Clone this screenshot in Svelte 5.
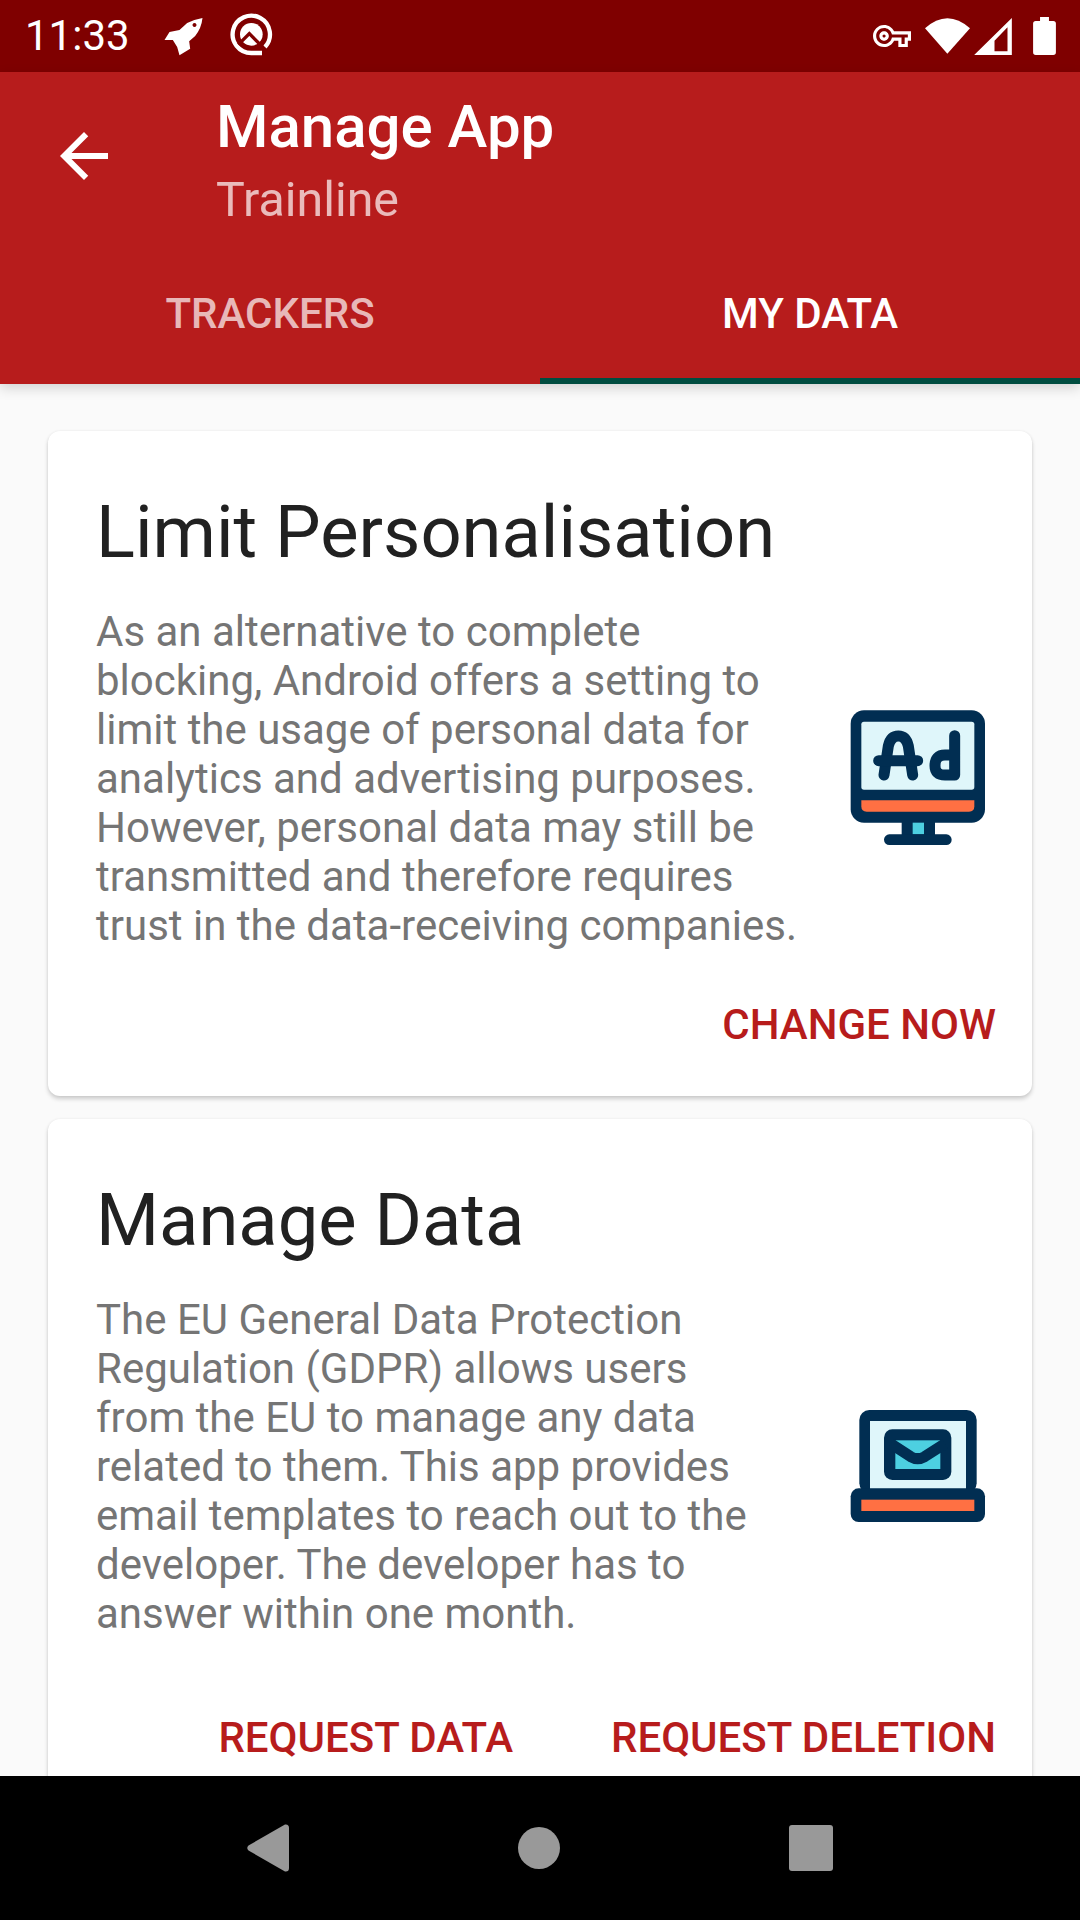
<script>
  const cards = [
    {
      title: 'Limit Personalisation',
      body: 'As an alternative to complete blocking, Android offers a setting to limit the usage of personal data for analytics and advertising purposes. However, personal data may still be transmitted and therefore requires trust in the data-receiving companies.',
      icon: 'ad',
      narrow: false,
      actions: ['CHANGE NOW']
    },
    {
      title: 'Manage Data',
      body: 'The EU General Data Protection Regulation (GDPR) allows users from the EU to manage any data related to them. This app provides email templates to reach out to the developer. The developer has to answer within one month.',
      icon: 'mail',
      narrow: true,
      actions: ['REQUEST DATA', 'REQUEST DELETION']
    }
  ];
</script>

<div class="screen">
  <div class="status">
    <span class="time">11:33</span>
    <svg class="rocket" viewBox="20 20 125 120" width="42" height="40">
      <path fill="#fff" fill-rule="evenodd" d="M141 26Q138 56 119 80L101 96L104 118L72 138L65 113L52 92L27 92L42 68L72 62L95 41Q115 30 141 26ZM117 41a6 6 0 1 0 .01 0Z" />
    </svg>
    <svg class="q" viewBox="0 0 180 165" width="60" height="55">
      <path fill="none" stroke="#fff" stroke-width="13" d="M144 111A56 56 0 1 0 103 129H135" />
      <circle cx="103" cy="73" r="34" fill="#fff" />
      <path fill="none" stroke="#7f0000" stroke-width="10" d="M64 104L97 71L136 110" />
    </svg>
    <span class="spacer"></span>
    <svg class="key" viewBox="0 0 24 24" width="38" height="38">
      <path fill="#fff" d="M22 19h-6v-4h-2.68c-1.14 2.42-3.6 4-6.32 4-3.86 0-7-3.14-7-7s3.14-7 7-7c2.72 0 5.17 1.58 6.32 4H24v6h-2v4zm-4-2h2v-4h2v-2H11.94l-.23-.67C11.01 8.34 9.11 7 7 7c-2.76 0-5 2.24-5 5s2.24 5 5 5c2.11 0 4.01-1.34 4.71-3.33l.23-.67H18v4zM7 15c-1.65 0-3-1.35-3-3s1.35-3 3-3 3 1.35 3 3-1.35 3-3 3zm0-4c-.55 0-1 .45-1 1s.45 1 1 1 1-.45 1-1-.45-1-1-1z" />
    </svg>
    <svg class="wifi" viewBox="225 55 135 107" width="45" height="36">
      <path fill="#fff" d="M292 162L225 85Q292 25 360 85Z" />
    </svg>
    <svg class="signal" viewBox="372 52 113 111" width="38" height="37">
      <path fill="#fff" fill-rule="evenodd" d="M372 163L485 52V163ZM433 152H472V80L433 120Z" />
    </svg>
    <svg class="battery" viewBox="549 48 69 115" width="23" height="38">
      <path fill="#fff" d="M570 48H597V60H610Q618 60 618 68V155Q618 163 610 163H557Q549 163 549 155V68Q549 60 557 60H570Z" />
    </svg>
  </div>

  <header class="appbar">
    <div class="toolbar">
      <svg class="back" viewBox="0 0 24 24" width="72" height="72">
        <path fill="#fff" d="M20 11H7.83l5.59-5.59L12 4l-8 8 8 8 1.41-1.41L7.83 13H20v-2z" />
      </svg>
      <div class="heading">
        <div class="title">Manage App</div>
        <div class="subtitle">Trainline</div>
      </div>
    </div>
    <div class="tabs">
      <div class="tab">TRACKERS</div>
      <div class="tab active">MY DATA</div>
    </div>
  </header>

  <main class="content">
    {#each cards as card}
      <section class="card">
        <h2>{card.title}</h2>
        <div class="row">
          <p class:narrow={card.narrow}>{card.body}</p>
          {#if card.icon === 'ad'}
            <svg class="art" viewBox="78 48 432 432" width="144" height="144">
              <rect x="92" y="58" width="403" height="337" rx="40" fill="#012e52" />
              <rect x="124" y="92" width="339" height="204" rx="8" fill="#dff6fa" />
              <path d="M124 328H463V346Q463 362 447 362H140Q124 362 124 346Z" fill="#ff7043" />
              <rect x="245" y="390" width="100" height="45" fill="#012e52" />
              <rect x="278" y="395" width="34" height="35" fill="#4dd0e1" />
              <rect x="192" y="430" width="203" height="32" rx="16" fill="#012e52" />
              <g fill="none" stroke="#012e52" stroke-width="33" stroke-linecap="round" stroke-linejoin="round">
                <path d="M192 252L205 165Q212 135 235 135Q258 135 265 165L278 252" />
                <path d="M176 209H293" />
                <path d="M404 134V252H375Q345 252 345 224Q345 192 375 192H404" />
              </g>
            </svg>
          {:else}
            <svg class="art" viewBox="78 12 432 432" width="144" height="144">
              <rect x="118" y="57" width="352" height="250" rx="30" fill="#012e52" />
              <rect x="150" y="90" width="288" height="210" fill="#dff6fa" />
              <rect x="92" y="292" width="403" height="101" rx="24" fill="#012e52" />
              <rect x="124" y="326" width="339" height="34" fill="#ff7043" />
              <rect x="192" y="115" width="202" height="152" rx="25" fill="#012e52" />
              <rect x="226" y="148" width="135" height="86" fill="#4dd0e1" />
              <path d="M212 158L272 197Q293 209 314 197L375 158" fill="none" stroke="#012e52" stroke-width="33" />
            </svg>
          {/if}
        </div>
        <div class="actions" class:split={card.actions.length > 1}>
          {#each card.actions as action}
            <span class="action">{action}</span>
          {/each}
        </div>
      </section>
    {/each}
  </main>

  <nav class="navbar">
    <svg viewBox="0 0 42 48" width="42" height="48">
      <path fill="#999" d="M38 0.5Q42 0 42 4V44Q42 48 38 47.5L1.5 26.5Q-1 24 1.5 21.5Z" />
    </svg>
    <span class="home"></span>
    <span class="recents"></span>
  </nav>
</div>

<style>
  :global(body) {
    margin: 0;
    background: #fafafa;
  }

  .screen {
    width: 1080px;
    height: 1920px;
    display: flex;
    flex-direction: column;
    overflow: hidden;
    font-family: Roboto, "Liberation Sans", sans-serif;
  }

  .status {
    height: 72px;
    flex: none;
    background: #7f0000;
    color: #fff;
    display: flex;
    align-items: center;
    padding: 0 24px 0 25px;
  }

  .time {
    font-size: 42px;
    line-height: 72px;
  }

  .rocket {
    margin-left: 32px;
  }

  .q {
    margin: 3px 0 0 13px;
  }

  .spacer {
    flex: 1;
  }

  .wifi {
    margin-left: 14px;
  }

  .signal {
    margin-left: 4px;
  }

  .battery {
    margin-left: 21px;
  }

  .appbar {
    flex: none;
    height: 312px;
    background: #b71c1c;
    display: flex;
    flex-direction: column;
    box-shadow: 0 4px 12px rgba(0, 0, 0, 0.16);
    position: relative;
  }

  .toolbar {
    display: flex;
    height: 168px;
  }

  .back {
    margin: 48px 0 0 48px;
  }

  .heading {
    margin-left: 96px;
    padding-top: 20px;
  }

  .title {
    font-size: 60px;
    line-height: 70px;
    font-weight: 500;
    color: #fff;
  }

  .subtitle {
    font-size: 48.3px;
    line-height: 56px;
    margin-top: 10px;
    color: rgba(255, 255, 255, 0.7);
  }

  .tabs {
    display: flex;
    flex: 1;
  }

  .tab {
    flex: 1;
    text-align: center;
    font-size: 42px;
    font-weight: 500;
    line-height: 148px;
    height: 144px;
    box-sizing: border-box;
    color: rgba(255, 255, 255, 0.7);
  }

  .tab.active {
    color: #fff;
    border-bottom: 6px solid #004d40;
  }

  .content {
    flex: 1;
    min-height: 0;
    overflow: hidden;
    padding: 47px 48px 0;
    background: #fafafa;
  }

  .card {
    background: #fff;
    border-radius: 12px;
    box-shadow: 0 3px 4px rgba(0, 0, 0, 0.18), 0 0 3px rgba(0, 0, 0, 0.06);
    padding: 60px 36px 47px 48px;
    margin-bottom: 23px;
  }

  h2 {
    margin: 0;
    font-size: 72.3px;
    line-height: 84px;
    font-weight: 400;
    color: #212121;
  }

  .row {
    display: flex;
    align-items: center;
    justify-content: space-between;
    margin-top: 32px;
  }

  p {
    flex: 1;
    margin: 0;
    font-size: 42px;
    line-height: 49px;
    color: #757575;
  }

  p.narrow {
    flex: none;
    width: 675px;
  }

  .art {
    flex: none;
    margin-left: 46px;
    margin-right: 6px;
  }

  .actions {
    display: flex;
    justify-content: flex-end;
    gap: 98px;
    margin-top: 50px;
  }

  .actions.split {
    margin-top: 75px;
  }

  .action {
    font-size: 42px;
    line-height: 49px;
    font-weight: 500;
    color: #b71c1c;
  }

  .navbar {
    flex: none;
    height: 144px;
    background: #000;
    display: flex;
    align-items: center;
    justify-content: center;
    gap: 229px;
  }

  .home {
    width: 42px;
    height: 42px;
    border-radius: 50%;
    background: #999;
  }

  .recents {
    width: 44px;
    height: 46px;
    border-radius: 3px;
    background: #999;
  }
</style>
